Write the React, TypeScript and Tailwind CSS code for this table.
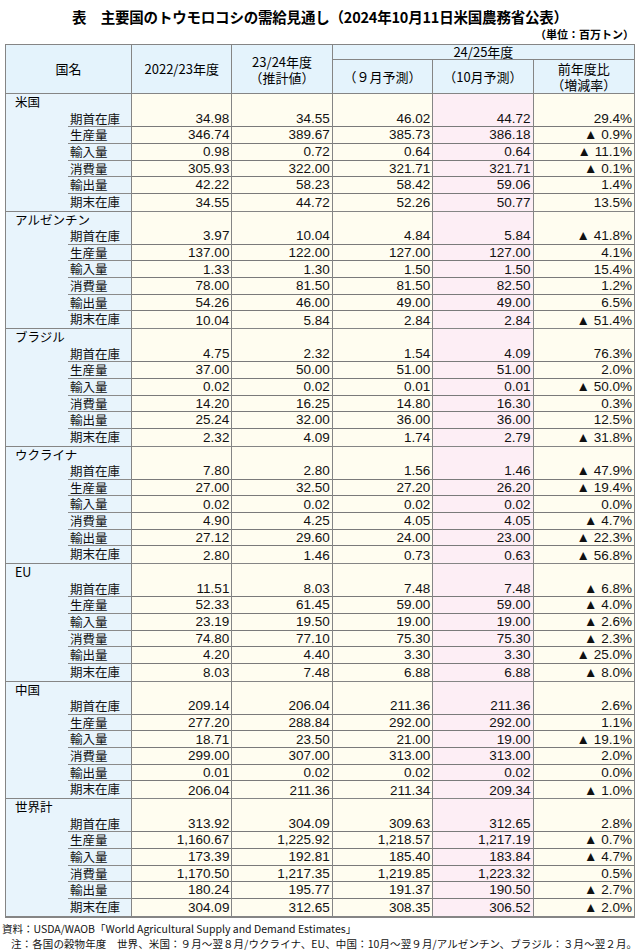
const items = ['期首在庫', '生産量', '輸入量', '消費量', '輸出量', '期末在庫'];

interface Block {
  name: string;
  data: string[][];
}

const blocks: Block[] = [
  {
    name: '米国',
    data: [
      ['34.98', '34.55', '46.02', '44.72', '29.4%'],
      ['346.74', '389.67', '385.73', '386.18', '▲ 0.9%'],
      ['0.98', '0.72', '0.64', '0.64', '▲ 11.1%'],
      ['305.93', '322.00', '321.71', '321.71', '▲ 0.1%'],
      ['42.22', '58.23', '58.42', '59.06', '1.4%'],
      ['34.55', '44.72', '52.26', '50.77', '13.5%'],
    ],
  },
  {
    name: 'アルゼンチン',
    data: [
      ['3.97', '10.04', '4.84', '5.84', '▲ 41.8%'],
      ['137.00', '122.00', '127.00', '127.00', '4.1%'],
      ['1.33', '1.30', '1.50', '1.50', '15.4%'],
      ['78.00', '81.50', '81.50', '82.50', '1.2%'],
      ['54.26', '46.00', '49.00', '49.00', '6.5%'],
      ['10.04', '5.84', '2.84', '2.84', '▲ 51.4%'],
    ],
  },
  {
    name: 'ブラジル',
    data: [
      ['4.75', '2.32', '1.54', '4.09', '76.3%'],
      ['37.00', '50.00', '51.00', '51.00', '2.0%'],
      ['0.02', '0.02', '0.01', '0.01', '▲ 50.0%'],
      ['14.20', '16.25', '14.80', '16.30', '0.3%'],
      ['25.24', '32.00', '36.00', '36.00', '12.5%'],
      ['2.32', '4.09', '1.74', '2.79', '▲ 31.8%'],
    ],
  },
  {
    name: 'ウクライナ',
    data: [
      ['7.80', '2.80', '1.56', '1.46', '▲ 47.9%'],
      ['27.00', '32.50', '27.20', '26.20', '▲ 19.4%'],
      ['0.02', '0.02', '0.02', '0.02', '0.0%'],
      ['4.90', '4.25', '4.05', '4.05', '▲ 4.7%'],
      ['27.12', '29.60', '24.00', '23.00', '▲ 22.3%'],
      ['2.80', '1.46', '0.73', '0.63', '▲ 56.8%'],
    ],
  },
  {
    name: 'EU',
    data: [
      ['11.51', '8.03', '7.48', '7.48', '▲ 6.8%'],
      ['52.33', '61.45', '59.00', '59.00', '▲ 4.0%'],
      ['23.19', '19.50', '19.00', '19.00', '▲ 2.6%'],
      ['74.80', '77.10', '75.30', '75.30', '▲ 2.3%'],
      ['4.20', '4.40', '3.30', '3.30', '▲ 25.0%'],
      ['8.03', '7.48', '6.88', '6.88', '▲ 8.0%'],
    ],
  },
  {
    name: '中国',
    data: [
      ['209.14', '206.04', '211.36', '211.36', '2.6%'],
      ['277.20', '288.84', '292.00', '292.00', '1.1%'],
      ['18.71', '23.50', '21.00', '19.00', '▲ 19.1%'],
      ['299.00', '307.00', '313.00', '313.00', '2.0%'],
      ['0.01', '0.02', '0.02', '0.02', '0.0%'],
      ['206.04', '211.36', '211.34', '209.34', '▲ 1.0%'],
    ],
  },
  {
    name: '世界計',
    data: [
      ['313.92', '304.09', '309.63', '312.65', '2.8%'],
      ['1,160.67', '1,225.92', '1,218.57', '1,217.19', '▲ 0.7%'],
      ['173.39', '192.81', '185.40', '183.84', '▲ 4.7%'],
      ['1,170.50', '1,217.35', '1,219.85', '1,223.32', '0.5%'],
      ['180.24', '195.77', '191.37', '190.50', '▲ 2.7%'],
      ['304.09', '312.65', '308.35', '306.52', '▲ 2.0%'],
    ],
  },
];

const jp = "font-['Noto_Sans_CJK_JP',sans-serif]";
const num = "font-['Liberation_Sans','Noto_Sans_CJK_JP',sans-serif]";

function CountryBlock({ block }: { block: Block }) {
  return (
    <div className="grid grid-cols-[126px_repeat(5,minmax(0,1fr))] border-b border-[#858585]">
      {/* label column */}
      <div className={`flex flex-col bg-[#e8f4fc] border-r border-[#858585] ${jp}`}>
        <div className="h-[16.65px] pl-[9px] text-[12.5px] leading-[16px] text-black">{block.name}</div>
        {items.map((label, i) => (
          <div
            key={label}
            className={`ml-[62px] h-[16.65px] pl-[2px] text-[12.5px] leading-[16px] text-[#111] ${
              i < items.length - 1 ? 'border-b border-[#8a8a8a]' : ''
            }`}
          >
            {label}
          </div>
        ))}
      </div>
      {[0, 1, 2, 3, 4].map((col) => (
        <div
          key={col}
          className={`flex flex-col ${col === 3 ? 'bg-[#fdeef5]' : 'bg-[#fffdf0]'} ${
            col < 4 ? 'border-r border-[#858585]' : ''
          } ${num}`}
        >
          {block.data.map((row, i) => (
            <div
              key={i}
              className={`flex items-end justify-end pr-[2px] pb-[1px] text-[13.5px] leading-none text-[#111] ${
                i === 0 ? 'h-[33.3px]' : 'h-[16.65px]'
              } ${i < block.data.length - 1 ? 'border-b border-[#7a7a7a]' : ''}`}
            >
              {row[col]}
            </div>
          ))}
        </div>
      ))}
    </div>
  );
}

export default function App() {
  return (
    <div className={`w-[640px] h-[952px] bg-white text-black ${jp}`}>
      <div className="pt-[7px] text-center text-[14.5px] leading-[20px] font-bold tracking-[-0.2px]">
        表　主要国のトウモロコシの需給見通し（2024年10月11日米国農務省公表）
      </div>
      <div className="pr-[6px] text-right text-[11px] leading-[14px] font-bold">（単位：百万トン）</div>

      <div className="mx-[5px] mt-[3px] border border-[#858585]">
        <div className="grid grid-cols-[126px_repeat(5,minmax(0,1fr))] grid-rows-[15px_33px] border-b border-[#858585] bg-[#e4f3fc] text-[13px] leading-[16px]">
          <div className="row-span-2 flex items-center justify-center border-r border-[#858585]">国名</div>
          <div className="row-span-2 flex items-center justify-center border-r border-[#858585]">2022/23年度</div>
          <div className="row-span-2 flex flex-col items-center justify-center pt-[1px] border-r border-[#858585]">
            <span>23/24年度</span>
            <span>（推計値）</span>
          </div>
          <div className="col-span-3 flex items-center justify-center border-b border-[#858585]">24/25年度</div>
          <div className="flex items-center justify-center border-r border-[#858585]">（９月予測）</div>
          <div className="flex items-center justify-center border-r border-[#858585]">（10月予測）</div>
          <div className="flex flex-col items-center justify-center">
            <span>前年度比</span>
            <span>（増減率）</span>
          </div>
        </div>
        {blocks.map((b) => (
          <CountryBlock key={b.name} block={b} />
        ))}
      </div>

      <div className="mt-[3px] pl-[2px] text-[10.5px] leading-[15px] text-[#111]">
        <div>資料：USDA/WAOB「World Agricultural Supply and Demand Estimates」</div>
        <div className="pl-[9px] whitespace-nowrap tracking-[0.1px]">
          注：各国の穀物年度　世界、米国：９月～翌８月/ウクライナ、EU、中国：10月～翌９月/アルゼンチン、ブラジル：３月～翌２月。
        </div>
      </div>
    </div>
  );
}
